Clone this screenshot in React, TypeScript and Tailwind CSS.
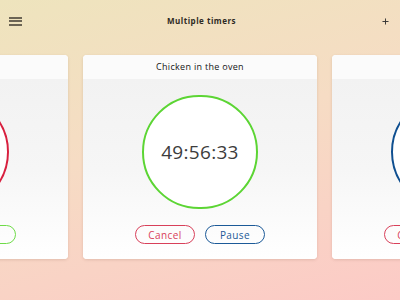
import { Plus } from 'lucide-react';

interface Timer {
  id: number;
  title: string;
  time: string;
  ring: string;
  pause: string;
  pauseLabel: string;
}

const timers: Timer[] = [
  { id: 1, title: 'Pasta', time: '08:12:04', ring: 'border-[#d8203f]', pause: 'border-[#6edb48] text-[#4cb82a]', pauseLabel: 'Start' },
  { id: 2, title: 'Chicken in the oven', time: '49:56:33', ring: 'border-[#5cd534]', pause: 'border-[#1c5a98] text-[#1c5a98]', pauseLabel: 'Pause' },
  { id: 3, title: 'Rice', time: '12:30:00', ring: 'border-[#0f4f90]', pause: 'border-[#1c5a98] text-[#1c5a98]', pauseLabel: 'Pause' },
];

function TimerCard({ t }: { t: Timer }) {
  return (
    <div className="flex h-[204px] w-[234px] shrink-0 flex-col overflow-hidden rounded-[4px] bg-white shadow-[0_1px_3px_rgba(120,80,60,0.18)]">
      <div className="flex h-[24px] items-center justify-center bg-[#fbfbfb] text-[9px] text-[#161616] tracking-[0.3px]">
        {t.title}
      </div>
      <div className="flex flex-1 flex-col items-center bg-gradient-to-b from-[#f2f2f2] via-[#f6f6f6] to-white pt-[16px]">
        <div className={`flex h-[114px] w-[116px] items-center justify-center rounded-full border-2 bg-white ${t.ring}`}>
          <span className="text-[19px] text-[#3c3c3c] tracking-[0.3px]">{t.time}</span>
        </div>
        <div className="mt-[16px] flex gap-[10px]">
          <button className="h-[19px] w-[60px] rounded-full border border-[#d8405a] text-[10px] leading-none text-[#d8405a] tracking-[0.4px]">
            Cancel
          </button>
          <button className={`h-[19px] w-[60px] rounded-full border text-[10px] leading-none tracking-[0.4px] ${t.pause}`}>
            {t.pauseLabel}
          </button>
        </div>
      </div>
    </div>
  );
}

export default function App() {
  return (
    <div
      className="h-[300px] w-[400px] overflow-hidden bg-[linear-gradient(165deg,#eee4bd_0%,#f6dcc4_45%,#fccac6_100%)]"
      style={{ fontFamily: '"Open Sans", sans-serif' }}
    >
      <header className="flex h-[42px] items-center justify-between pl-[9px] pr-[10px]">
        <div className="flex w-[13px] flex-col gap-[1.5px]">
          <span className="h-[2px] bg-[#6b6454]" />
          <span className="h-[2px] bg-[#6b6454]" />
          <span className="h-[2px] bg-[#6b6454]" />
        </div>
        <span className="text-[8px] font-bold tracking-[0.5px] text-[#2e2a24]">Multiple timers</span>
        <Plus className="h-[9px] w-[9px] text-[#333]" strokeWidth={2.5} />
      </header>
      <div className="flex justify-center gap-[15px] pt-[13px]">
        {timers.map((t) => (
          <TimerCard key={t.id} t={t} />
        ))}
      </div>
    </div>
  );
}
